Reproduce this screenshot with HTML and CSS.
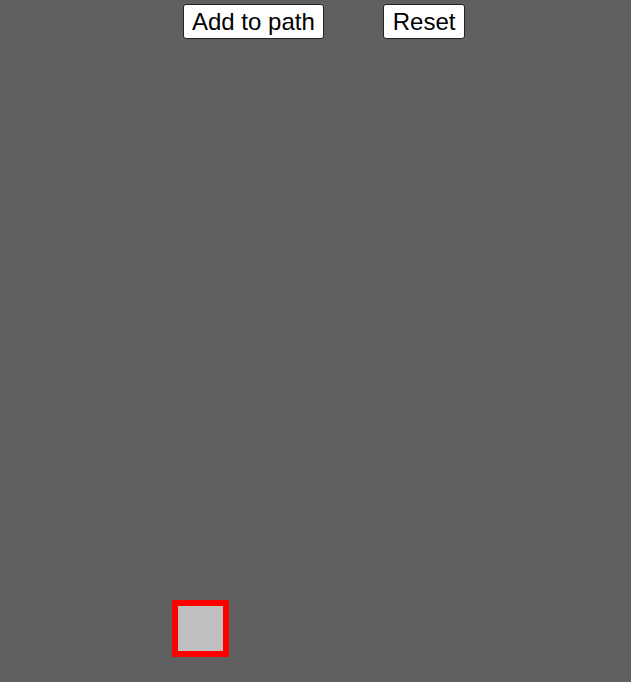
FILE: index.html
```html
<!DOCTYPE html>
<html>
<head>
<meta charset="utf-8">
<link rel="stylesheet" href="styles.css">
</head>
<body>
<div class="toolbar">
  <button class="btn">Add to path</button>
  <button class="btn btn-reset">Reset</button>
</div>
<div class="canvas">
  <div class="node"></div>
</div>
</body>
</html>
```
FILE: styles.css
```css
html, body {
  margin: 0;
  padding: 0;
  background: #606060;
  width: 631px;
  height: 682px;
  overflow: hidden;
}
.toolbar {
  display: flex;
  gap: 59px;
  padding: 4px 0 0 183px;
}
.btn {
  font-family: "Liberation Sans", Arial, sans-serif;
  font-size: 24px;
  line-height: 27px;
  height: 35px;
  padding: 3px 8px;
  margin: 0;
  background: #ffffff;
  color: #000;
  border: 1px solid #222;
  border-radius: 3px;
  box-sizing: border-box;
}
.btn-reset {
  padding: 3px 9px;
}
.canvas {
  position: relative;
  height: 643px;
}
.node {
  position: absolute;
  left: 172px;
  top: 561px;
  width: 57px;
  height: 57px;
  box-sizing: border-box;
  border: 6px solid #ff0000;
  border-radius: 2px;
  background: #c0c0c0;
}
```
